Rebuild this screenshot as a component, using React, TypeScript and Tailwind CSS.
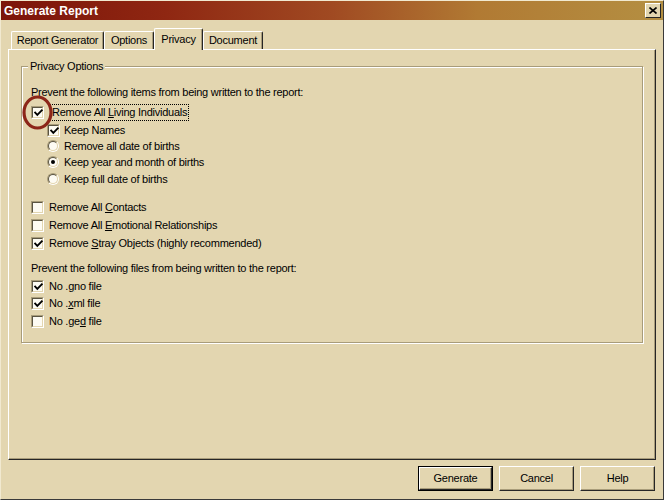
import React from "react";

const BG = "bg-[#e3d6b0]";

function CheckBox({ checked }: { checked: boolean }) {
  return (
    <div className="relative w-[13px] h-[13px] shrink-0 border border-t-[#a89c7a] border-l-[#a89c7a] border-r-white border-b-white">
      <div className="w-full h-full bg-[#fdfbf3] border border-t-[#5a5442] border-l-[#5a5442] border-r-[#e3d6b0] border-b-[#e3d6b0]" />
      {checked && (
        <svg className="absolute left-0 top-0" width="13" height="13" viewBox="0 0 13 13">
          <path d="M3.2 5.6 L5.3 7.8 L9.8 3.3" fill="none" stroke="#000" strokeWidth="1.9" strokeLinecap="square" />
        </svg>
      )}
    </div>
  );
}

function Radio({ checked }: { checked: boolean }) {
  return (
    <div className="relative w-[13px] h-[13px] shrink-0">
      <div className="absolute left-0 top-0 w-[12px] h-[12px] rounded-full border border-t-[#a89c7a] border-l-[#a89c7a] border-r-white border-b-white">
        <div className="w-full h-full rounded-full bg-[#fdfbf3] border border-t-[#5a5442] border-l-[#5a5442] border-r-[#e3d6b0] border-b-[#e3d6b0] flex items-center justify-center">
          {checked && <div className="w-[4px] h-[4px] rounded-full bg-black" />}
        </div>
      </div>
    </div>
  );
}

function Tab({ label, w, selected }: { label: string; w: string; selected?: boolean }) {
  if (selected) {
    return (
      <div
        className={`relative z-10 ${w} h-[22px] -mb-[1px] ${BG} border-t border-l border-t-white border-l-white border-r border-r-[#262626] rounded-t-[2px] shadow-[inset_-1px_0_0_#a89c7a] flex items-start justify-center pt-[2px]`}
      >
        <span>{label}</span>
      </div>
    );
  }
  return (
    <div
      className={`${w} h-[18px] border-t border-l border-t-white border-l-white border-r border-r-[#262626] rounded-t-[2px] shadow-[inset_-1px_0_0_#a89c7a] flex items-center justify-center`}
    >
      <span>{label}</span>
    </div>
  );
}

function Button({ label, isDefault }: { label: string; isDefault?: boolean }) {
  const inner = (
    <div className="w-full h-full border border-t-white border-l-white border-r-[#262626] border-b-[#262626] shadow-[inset_-1px_-1px_0_#a89c7a] flex items-center justify-center">
      <span>{label}</span>
    </div>
  );
  if (isDefault) {
    return <div className="w-[75px] h-[25px] border border-black">{inner}</div>;
  }
  return <div className="w-[75px] h-[25px]">{inner}</div>;
}

export default function App() {
  return (
    <div
      className={`relative w-[664px] h-[500px] overflow-hidden ${BG} border border-t-[#f1e9d0] border-l-[#f1e9d0] border-r-[#3a3a3a] border-b-[#3a3a3a] text-[11px] tracking-[-0.25px] text-black font-['Liberation_Sans',Arial,sans-serif] flex flex-col`}
    >
      {/* Title bar */}
      <div className="h-[19px] bg-[linear-gradient(to_right,#7c1409,#8f2712_25%,#a04a22_50%,#b17a33_72%,#b48f42)] flex items-center justify-between pl-[3px] pr-[2px]">
        <span className="text-white font-bold text-[12px] tracking-normal">Generate Report</span>
        <div className={`w-[16px] h-[15px] ${BG} border border-t-white border-l-white border-r-[#262626] border-b-[#262626] flex items-center justify-center`}>
          <svg width="8" height="7" viewBox="0 0 8 7">
            <path d="M0.5 0.5 L7.5 6.5 M7.5 0.5 L0.5 6.5" stroke="#000" strokeWidth="1.6" />
          </svg>
        </div>
      </div>

      {/* Tabs */}
      <div className="px-[7px]">
        <div className="h-[29px] flex items-end pl-[3px]">
          <Tab label="Report Generator" w="w-[93px]" />
          <Tab label="Options" w="w-[50px]" />
          <Tab label="Privacy" w="w-[49px]" selected />
          <Tab label="Document" w="w-[60px]" />
        </div>

        {/* Tab panel */}
        <div className="relative h-[411px] border border-t-white border-l-white border-r-[#262626] border-b-[#262626] shadow-[inset_-1px_-1px_0_#a89c7a] pt-[16px]">
          <div className="relative ml-[12px] w-[622px] h-[277px] border border-[#a89c7a] shadow-[inset_1px_1px_0_#fff,1px_1px_0_#fff] pt-[17px] pl-[9px]">
            <div className={`absolute -top-[8px] left-[6px] px-[2px] h-[14px] ${BG} flex items-center`}>
              Privacy Options
            </div>

            <div className="h-[16px] flex items-center">
              Prevent the following items from being written to the report:
            </div>

            <div className="mt-[4px] h-[17px] flex items-center">
              <CheckBox checked />
              <div className="ml-[6px] h-[17px] px-[1px] border border-dotted border-black flex items-center">
                <span>
                  Remove All <span className="underline">L</span>iving Individuals
                </span>
              </div>
            </div>

            <div className="pl-[16px]">
              <div className="mt-[1px] h-[16px] flex items-center">
                <CheckBox checked />
                <span className="ml-[4px]">Keep Names</span>
              </div>
              <div className="h-[16px] flex items-center">
                <Radio checked={false} />
                <span className="ml-[4px]">Remove all date of births</span>
              </div>
              <div className="h-[16px] flex items-center">
                <Radio checked />
                <span className="ml-[4px]">Keep year and month of births</span>
              </div>
              <div className="mt-[1px] h-[16px] flex items-center">
                <Radio checked={false} />
                <span className="ml-[4px]">Keep full date of births</span>
              </div>
            </div>

            <div className="mt-[12px] h-[16px] flex items-center">
              <CheckBox checked={false} />
              <span className="ml-[5px]">
                Remove All <span className="underline">C</span>ontacts
              </span>
            </div>
            <div className="mt-[2px] h-[16px] flex items-center">
              <CheckBox checked={false} />
              <span className="ml-[5px]">
                Remove All <span className="underline">E</span>motional Relationships
              </span>
            </div>
            <div className="mt-[2px] h-[16px] flex items-center">
              <CheckBox checked />
              <span className="ml-[5px]">
                Remove <span className="underline">S</span>tray Objects (highly recommended)
              </span>
            </div>

            <div className="mt-[9px] h-[16px] flex items-center">
              Prevent the following files from being written to the report:
            </div>

            <div className="mt-[2px] h-[16px] flex items-center">
              <CheckBox checked />
              <span className="ml-[5px]">
                No .<span className="underline">g</span>no file
              </span>
            </div>
            <div className="mt-[1px] h-[16px] flex items-center">
              <CheckBox checked />
              <span className="ml-[5px]">
                No .<span className="underline">x</span>ml file
              </span>
            </div>
            <div className="mt-[2px] h-[16px] flex items-center">
              <CheckBox checked={false} />
              <span className="ml-[5px]">
                No .ge<span className="underline">d</span> file
              </span>
            </div>
          </div>
        </div>

        {/* Buttons */}
        <div className="mt-[6px] flex justify-end gap-[6px] pr-[1px]">
          <Button label="Generate" isDefault />
          <Button label="Cancel" />
          <Button label="Help" />
        </div>
      </div>

      {/* Red annotation circle */}
      <svg className="absolute left-[20px] top-[93px] pointer-events-none" width="36" height="38" viewBox="0 0 36 38">
        <ellipse cx="16.5" cy="18.5" rx="13.5" ry="15.5" fill="none" stroke="#8c2619" strokeWidth="3.2" />
      </svg>
    </div>
  );
}
